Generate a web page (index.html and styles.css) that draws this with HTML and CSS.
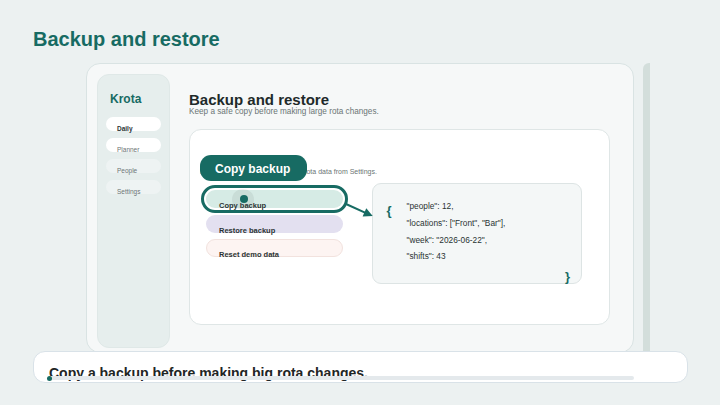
FILE: index.html
```html
<!DOCTYPE html>
<html lang="en">
<head>
<meta charset="utf-8">
<title>Backup and restore</title>
<link rel="stylesheet" href="styles.css">
</head>
<body>
<div class="page">
  <h1 class="title">Backup and restore</h1>
  <div class="device">
    <aside class="sidebar">
      <div class="brand">Krota</div>
      <nav class="nav">
        <div class="nav-item active">Daily</div>
        <div class="nav-item white">Planner</div>
        <div class="nav-item">People</div>
        <div class="nav-item">Settings</div>
      </nav>
    </aside>
    <main class="main">
      <h2 class="heading">Backup and restore</h2>
      <p class="sub">Keep a safe copy before making large rota changes.</p>
      <section class="card">
        <p class="desc">Make a copy, restore or reset the rota data from Settings.</p>
        <div class="row">
          <div class="actions">
            <div class="btn btn-copy">Copy backup<span class="halo"></span><span class="dot"></span></div>
            <div class="btn btn-restore">Restore backup</div>
            <div class="btn btn-reset">Reset demo data</div>
          </div>
          <div class="json">
            <span class="brace open">{</span>
            <div class="lines">
              <div>"people": 12,</div>
              <div>"locations": ["Front", "Bar"],</div>
              <div>"week": "2026-06-22",</div>
              <div>"shifts": 43</div>
            </div>
            <span class="brace close">}</span>
          </div>
        </div>
        <div class="pill">Copy backup</div>
        <svg class="arrow" width="40" height="26" viewBox="0 0 40 26">
          <line x1="6" y1="6" x2="25" y2="14.6" stroke="#176b63" stroke-width="2" stroke-linecap="round"/>
          <polygon points="32.7,18 22.6,18.4 26.3,10.2" fill="#176b63"/>
        </svg>
      </section>
    </main>
  </div>
  <div class="caption">
    <div class="caption-text">Copy a backup before making big rota changes.</div>
    <div class="progress"><span class="progress-dot"></span></div>
  </div>
</div>
</body>
</html>
```
FILE: styles.css
```css
body {
  margin: 0;
  background: #ecf1f1;
  font-family: "Liberation Sans", Arial, sans-serif;
}

.page {
  position: relative;
  width: 720px;
  height: 405px;
  overflow: hidden;
  padding: 29px 0 0 33px;
  box-sizing: border-box;
}

.title {
  margin: 0;
  font-size: 20px;
  line-height: 21px;
  font-weight: 700;
  color: #176b63;
}

.device {
  position: relative;
  margin: 13px 0 0 53px;
  width: 548px;
  height: 290px;
  box-sizing: border-box;
  border: 1px solid #d9e3e3;
  border-radius: 14px;
  background: #f6f8f8;
  display: flex;
  padding: 10px;
}

.device::after {
  content: "";
  position: absolute;
  top: -1px;
  right: -17px;
  width: 7px;
  bottom: -2px;
  background: #d3dedb;
  border-radius: 6px 0 0 0;
}

.sidebar {
  width: 73px;
  height: 274px;
  flex: none;
  box-sizing: border-box;
  border: 1px solid #dfe8e7;
  border-radius: 12px;
  background: #e6eeed;
  padding: 17.5px 8px 0;
}

.brand {
  font-size: 12px;
  line-height: 12px;
  font-weight: 700;
  color: #176b63;
  padding-left: 4px;
}

.nav {
  margin-top: 12px;
  display: flex;
  flex-direction: column;
  gap: 7px;
}

.nav-item {
  height: 14px;
  box-sizing: border-box;
  border-radius: 8px;
  background: #eef3f3;
  padding: 9px 0 0 11px;
  font-size: 6.5px;
  line-height: 6.5px;
  color: #6a7373;
}

.nav-item.white {
  background: #ffffff;
}

.nav-item.active {
  background: #ffffff;
  font-weight: 700;
  color: #2a3434;
}

.main {
  margin-left: 19px;
  padding-top: 18px;
  width: 421px;
  flex: none;
}

.heading {
  margin: 0;
  font-size: 15px;
  line-height: 16px;
  font-weight: 700;
  color: #1e2a2a;
}

.sub {
  margin: 0;
  font-size: 8.2px;
  line-height: 8px;
  color: #6b7575;
}

.card {
  position: relative;
  margin-top: 13px;
  height: 196px;
  box-sizing: border-box;
  border: 1px solid #dfe6e6;
  border-radius: 12px;
  background: #ffffff;
  padding: 38px 27px 0 10px;
}

.desc {
  margin: 0;
  font-size: 7px;
  line-height: 8px;
  color: #6b7575;
  white-space: nowrap;
}

.row {
  display: flex;
  margin-top: 7px;
}

.actions {
  margin-left: 6px;
  padding-top: 7px;
  width: 137px;
  flex: none;
  display: flex;
  flex-direction: column;
  gap: 6.5px;
}

.btn {
  position: relative;
  height: 18px;
  box-sizing: border-box;
  border-radius: 9px;
  padding: 12px 0 0 13px;
  font-size: 7.5px;
  line-height: 7px;
  font-weight: 700;
  color: #2b3333;
}

.btn-copy {
  background: #d6ebe5;
  outline: 3px solid #176b63;
  outline-offset: 2px;
}

.btn-restore {
  background: #e3e0f0;
}

.btn-reset {
  background: #fdf4f2;
  border: 1px solid #f2e2de;
  padding: 11px 0 0 12px;
}

.halo {
  position: absolute;
  left: 26px;
  top: -1px;
  width: 22px;
  height: 21px;
  border-radius: 50%;
  background: rgba(90, 100, 100, 0.1);
}

.dot {
  position: absolute;
  left: 34px;
  top: 5px;
  width: 8px;
  height: 8px;
  border-radius: 50%;
  background: #176b63;
}

.json {
  margin-left: 29px;
  width: 210px;
  height: 101px;
  flex: none;
  box-sizing: border-box;
  border: 1px solid #dde4e4;
  border-radius: 9px;
  background: #f4f7f7;
  padding: 14.3px 11px 0 13.5px;
  display: grid;
  grid-template-columns: 20px 1fr;
  align-items: start;
}

.brace {
  font-size: 13px;
  line-height: 13px;
  font-weight: 700;
  color: #176b63;
}

.brace.open {
  margin-top: 5.7px;
}

.brace.close {
  grid-column: 2;
  justify-self: end;
  margin-top: 4.4px;
}

.lines {
  font-size: 8.3px;
  line-height: 16.7px;
  color: #2a3333;
  white-space: nowrap;
}

.pill {
  position: absolute;
  left: 10px;
  top: 25px;
  width: 107px;
  height: 26px;
  box-sizing: border-box;
  border-radius: 11px;
  background: #176b63;
  color: #ffffff;
  font-size: 12px;
  line-height: 24px;
  padding: 2px 0 0 15px;
  font-weight: 700;
  white-space: nowrap;
}

.arrow {
  position: absolute;
  left: 150px;
  top: 68px;
}

.caption {
  position: absolute;
  left: 33px;
  top: 351px;
  width: 655px;
  height: 32px;
  box-sizing: border-box;
  border: 1px solid #d9e2e8;
  border-radius: 12px;
  background: #ffffff;
  overflow: hidden;
  padding: 14px 0 0 15px;
}

.caption-text {
  font-size: 14px;
  line-height: 14px;
  font-weight: 700;
  color: #1f2626;
  white-space: nowrap;
}

.progress {
  position: absolute;
  left: 14px;
  right: 53px;
  top: 24px;
  height: 4px;
  border-radius: 2px;
  background: #e4e9ec;
}

.progress-dot {
  position: absolute;
  left: -1px;
  top: -0.5px;
  width: 5px;
  height: 5px;
  border-radius: 50%;
  background: #176b63;
}
```
